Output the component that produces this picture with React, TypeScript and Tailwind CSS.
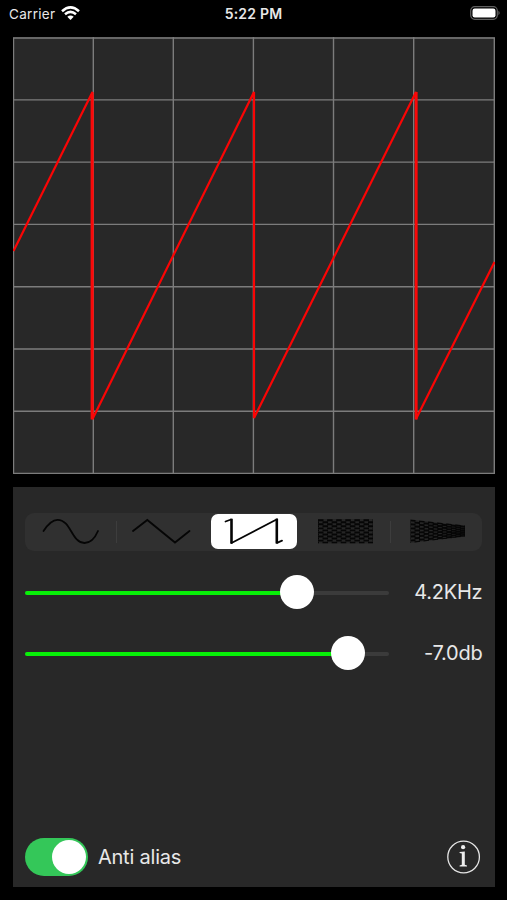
import React, { useId } from 'react';

const stroke = { fill: 'none', stroke: '#050505', strokeWidth: 1.8, strokeLinecap: 'round' as const, strokeLinejoin: 'round' as const };

function SineIcon() {
  return (
    <svg className="h-9 w-[60px]" viewBox="0 0 60 36" {...stroke}>
      <path d="M2.500 18C7 11 11.500 6.800 16.500 6.800C30 6.800 30.500 30 43.500 30C49 30 54 25 57 18" />
    </svg>
  );
}

function TriangleIcon() {
  return (
    <svg className="h-9 w-[60px]" viewBox="0 0 60 36" {...stroke} strokeLinejoin="miter">
      <path d="M1 18L15.300 7L43 29.500L57.500 18" />
    </svg>
  );
}

function SawIcon() {
  return (
    <svg className="h-9 w-[60px]" viewBox="0 0 60 36" {...stroke}>
      <path d="M1.500 8.500L7 6.500" />
      <path d="M7.500 5.800V30.500M52.800 5.800V30.500" strokeWidth="2.600" strokeLinecap="butt" />
      <path d="M7.500 30L53 6.300M53 29.800L58 27.700" />
    </svg>
  );
}

function NoiseIcon({ tapered = false }: { tapered?: boolean }) {
  const id = useId();
  return (
    <svg className="h-9 w-[60px]" viewBox="0 0 60 36">
      <clipPath id={id}>
        <path d={tapered ? 'M3.500 6.500L58 12.500V23.500L3.500 30Z' : 'M3 6H58V30.500H3Z'} />
      </clipPath>
      <g clipPath={`url(#${id})`} fill="none" stroke="#060606" strokeWidth="1.900">
        <path d="M3 18.200H58" strokeWidth="25" strokeOpacity=".25" />
        {Array.from({ length: 12 }, (_, row) => {
          const y = 7.2 + row * 2.04;
          const endY = tapered ? 18.1 + (y - 18.1) * 0.5 : y;
          return (
            <path key={row} d={`M3 ${y}L58 ${endY}`} strokeDasharray="5.500 3.600" strokeDashoffset={row % 2 ? 4.55 : 0} />
          );
        })}
      </g>
    </svg>
  );
}

function Scope() {
  return (
    <svg className="block h-[437px] w-[482px] bg-[#282828]" viewBox="0 0 482 437" fill="none">
      <path
        d="M.5 1H481.300V436.400H.5ZM80.300 0V436M160.300 0V436M240.400 0V436M320.500 0V436M400.700 0V436M0 62.900H482M0 125.100H482M0 187.400H482M0 249.700H482M0 312H482M0 374.300H482"
        stroke="#7c7c7c" strokeWidth="1.400"
      />
      <path d="M.5 214L79.500 55V382L241 55V381L403 55V382L481.500 225" stroke="#fa0505" strokeWidth="2.200" strokeLinejoin="bevel" />
      <path d="M79 57V382.500M403.200 55V382.500" stroke="#fa0808" strokeWidth="2.800" />
    </svg>
  );
}

function SliderRow({ value, label }: { value: number; label: string }) {
  return (
    <div className="flex h-[34px] items-center justify-between">
      <div className="relative h-[34px] w-[364px]">
        <div className="absolute top-[16px] h-[3.500px] w-full rounded-full bg-[#3b3b3b]" />
        <div className="absolute top-[16px] h-[3.500px] rounded-full bg-[#08f008]" style={{ width: value }} />
        <div className="absolute top-0 size-[34px] rounded-full bg-white" style={{ left: value - 17 }} />
      </div>
      <span className="text-[20px] leading-[34px] tracking-[-0.25px] text-[#e8e8e8]">{label}</span>
    </div>
  );
}

export default function App() {
  const tabs = [SineIcon, TriangleIcon, SawIcon, NoiseIcon, NoiseIcon];
  return (
    <div className="flex h-[900px] w-[507px] flex-col bg-black font-['Inter','Liberation_Sans',sans-serif]">
      <header className="grid h-[37px] shrink-0 grid-cols-3 pt-[5px] pr-[6px] pl-[9px] text-[13.500px] leading-[18px] text-[#e8e8e8]">
        <div className="flex h-[18px] items-center gap-[6px]">
          <span className="tracking-[0.3px]">Carrier</span>
          <svg className="mb-[2px] h-[14px] w-[19px]" viewBox="0 0 19 14" fill="none" stroke="white" strokeWidth="2.500">
            <path d="M1 5.200Q9.500 -2.500 18 5.200M4 8.300Q9.500 3.500 15 8.300" />
            <path d="M6.300 10.800Q9.500 8 12.700 10.800L9.500 14Z" fill="white" stroke="none" />
          </svg>
        </div>
        <div className="h-[18px] pr-[3px] text-center text-[14px] font-semibold tracking-[0.2px]">5:22 PM</div>
        <div className="flex h-[18px] items-center justify-end pb-[2px]">
          <svg className="h-[14px] w-[31px]" viewBox="0 0 31 14">
            <rect x=".7" y=".7" width="26.600" height="12.600" rx="4" fill="none" stroke="#606060" strokeWidth="1.200" />
            <rect x="2.500" y="2.500" width="23" height="9" rx="2.200" fill="white" />
            <path d="M28.500 4.800Q30.700 7 28.500 9.200Z" fill="#707070" />
          </svg>
        </div>
      </header>

      <main className="flex flex-col gap-[13px] pl-[13px]">
        <Scope />
        <section className="flex h-[400px] w-[482px] flex-col bg-[#282828] pt-[25.500px] pr-[12px] pl-[12.400px]">
          <div className="grid h-[38px] w-[457px] grid-cols-5 rounded-[9px] bg-[#303030]">
            {tabs.map((Icon, i) => (
              <button key={i} className="relative flex items-center justify-center">
                {i === 2 && <span className="absolute top-[1.500px] left-[2.700px] h-[34.500px] w-[86px] rounded-[7px] bg-white" />}
                <span className="relative -top-[0.500px]">
                  {i >= 3 ? <NoiseIcon tapered={i === 4} /> : <Icon />}
                </span>
                {(i === 0 || i === 3) && <span className="absolute top-2 right-0 h-[22px] w-px bg-[#3d3d3d]" />}
              </button>
            ))}
          </div>
          <div className="mt-[24.500px] flex w-[457px] flex-col gap-[27px]">
            <SliderRow value={272} label="4.2KHz" />
            <SliderRow value={323} label="-7.0db" />
          </div>
          <footer className="mt-auto mb-[11px] flex h-[39px] w-[457px] items-center">
            <div className="flex h-[38px] w-[62.500px] items-center justify-end rounded-full bg-[#34c759] pr-[2px]">
              <div className="size-[34px] rounded-full bg-white" />
            </div>
            <span className="ml-[10px] text-[20px] leading-6 tracking-[-0.2px] text-[#e8e8e8]">Anti alias</span>
            <svg className="ml-auto size-[35px]" viewBox="0 0 35 35">
              <circle cx="16.600" cy="18" r="15.800" fill="none" stroke="#e5e5e5" strokeWidth="1.300" />
              <circle cx="16.100" cy="8.200" r="2.100" fill="#eee" />
              <path d="M12.600 13L17.800 12.500V25.800L20 26.600V27.500H12.600V26.600L14.800 25.800V14.500L12.600 14Z" fill="#eee" />
            </svg>
          </footer>
        </section>
      </main>
    </div>
  );
}
